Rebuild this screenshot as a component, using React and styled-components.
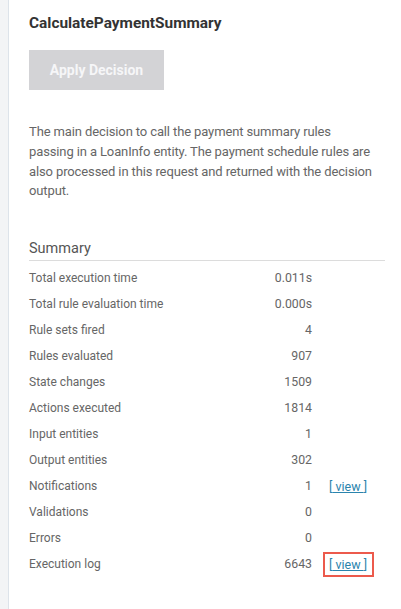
import React from "react";
import styled, { createGlobalStyle } from "styled-components";

const GlobalStyle = createGlobalStyle`
  html, body {
    margin: 0;
    padding: 0;
    background: #ffffff;
    font-family: Roboto, "Liberation Sans", Arial, sans-serif;
  }
`;

const Page = styled.div`
  display: flex;
  min-height: 100vh;
`;

const SideStrip = styled.div`
  width: 8px;
  flex-shrink: 0;
  background: #f3f4f6;
  border-right: 1px solid #dde3ea;
`;

const Content = styled.div`
  flex: 1;
  padding: 13px 16px 20px 20px;
`;

const Title = styled.h2`
  margin: 0;
  font-size: 15.4px;
  font-weight: 700;
  color: #333;
  line-height: 20px;
`;

const ApplyButton = styled.button`
  margin-top: 17px;
  width: 135px;
  height: 40px;
  border: none;
  background: #d3d3d6;
  color: #f6f6f8;
  font-family: inherit;
  font-size: 14px;
  font-weight: 700;
  cursor: default;
`;

const Description = styled.p`
  margin: 32px 0 0;
  padding-right: 8px;
  font-size: 13px;
  letter-spacing: -0.12px;
  line-height: 19.8px;
  color: #666;
`;

const SectionHeader = styled.div`
  margin-top: 39px;
  font-size: 14.5px;
  color: #555;
  padding-bottom: 2px;
  border-bottom: 1px solid #dcdcdc;
  line-height: 18px;
`;

const Rows = styled.div`
  padding-top: 4px;
`;

const Row = styled.div`
  display: flex;
  align-items: center;
  height: 26px;
  font-size: 12px;
  color: #666;
`;

const Label = styled.div`
  flex: 1;
`;

const Value = styled.div`
  width: 80px;
  text-align: right;
  font-size: 12.3px;
`;

const LinkCell = styled.div`
  width: 73px;
  padding-left: 17px;
  box-sizing: border-box;
`;

const ViewLink = styled.a`
  position: relative;
  color: #2a84ad;
  font-size: 12.5px;
  cursor: pointer;

  span {
    text-decoration: underline;
  }

  ${(p) =>
    p.$boxed &&
    `
    &::after {
      content: "";
      position: absolute;
      left: -6px;
      right: -7px;
      top: -5px;
      bottom: -5px;
      border: 2px solid #ec5a4c;
    }
  `}
`;

const summary = [
  { label: "Total execution time", value: "0.011s" },
  { label: "Total rule evaluation time", value: "0.000s" },
  { label: "Rule sets fired", value: "4" },
  { label: "Rules evaluated", value: "907" },
  { label: "State changes", value: "1509" },
  { label: "Actions executed", value: "1814" },
  { label: "Input entities", value: "1" },
  { label: "Output entities", value: "302" },
  { label: "Notifications", value: "1", link: true },
  { label: "Validations", value: "0" },
  { label: "Errors", value: "0" },
  { label: "Execution log", value: "6643", link: true, boxed: true },
];

export default function App() {
  return (
    <>
      <GlobalStyle />
      <Page>
        <SideStrip />
        <Content>
          <Title>CalculatePaymentSummary</Title>
          <ApplyButton>Apply Decision</ApplyButton>
          <Description>
            The main decision to call the payment summary rules passing in a
            LoanInfo entity. The payment schedule rules are also processed in
            this request and returned with the decision output.
          </Description>
          <SectionHeader>Summary</SectionHeader>
          <Rows>
            {summary.map((item, index) => (
              <Row key={`row${index}`}>
                <Label>{item.label}</Label>
                <Value>{item.value}</Value>
                <LinkCell>
                  {item.link && (
                    <ViewLink $boxed={item.boxed}>
                      [<span> view </span>]
                    </ViewLink>
                  )}
                </LinkCell>
              </Row>
            ))}
          </Rows>
        </Content>
      </Page>
    </>
  );
}
